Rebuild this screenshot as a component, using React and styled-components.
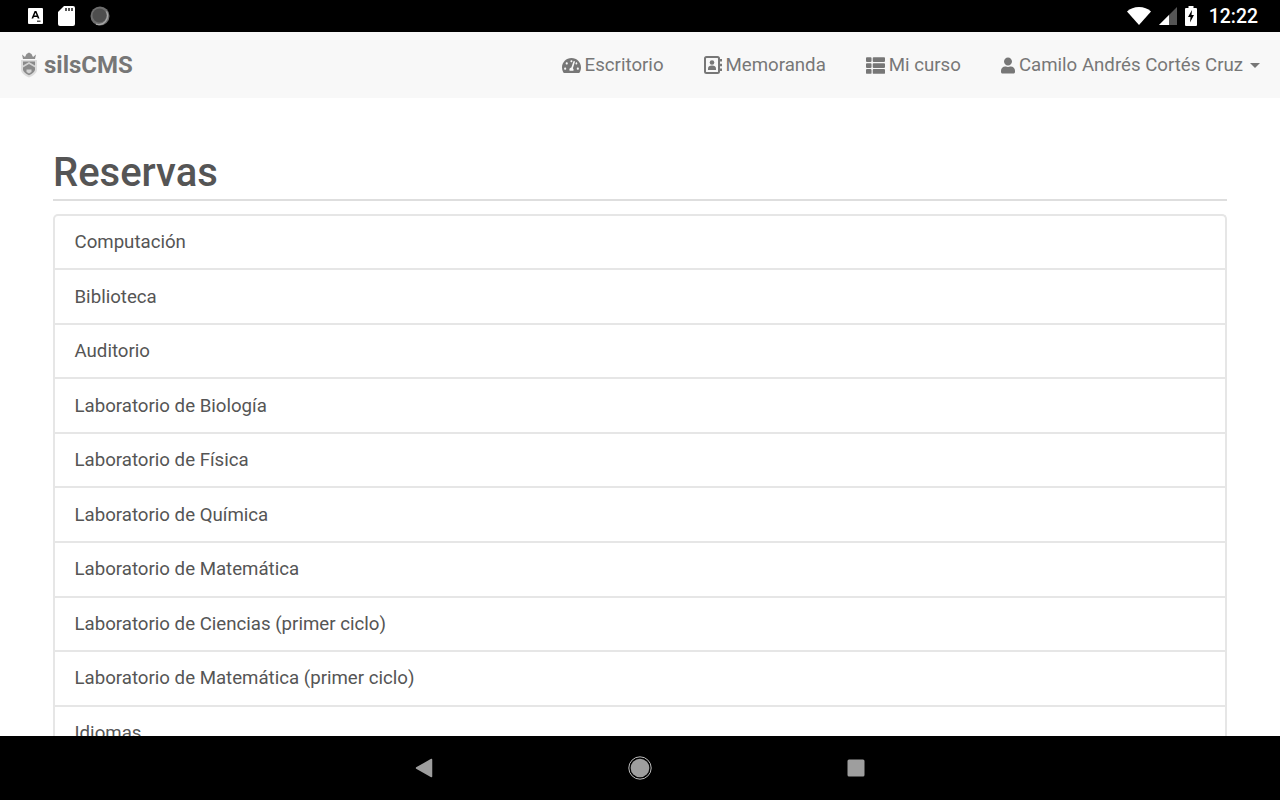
import React from "react";
import styled, { createGlobalStyle } from "styled-components";
import { FaTachometerAlt, FaThList, FaUser } from "react-icons/fa";

const GlobalStyle = createGlobalStyle`
  html, body {
    margin: 0;
    padding: 0;
    background: #000;
  }
  * {
    box-sizing: border-box;
  }
`;

const Screen = styled.div`
  width: 1280px;
  height: 800px;
  display: flex;
  flex-direction: column;
  overflow: hidden;
  font-family: Roboto, "Liberation Sans", sans-serif;
`;

const StatusBar = styled.div`
  height: 32px;
  flex: none;
  background: #000;
  display: flex;
  align-items: center;
  justify-content: space-between;
  padding: 0 22px 0 27px;
`;

const StatusGroup = styled.div`
  display: flex;
  align-items: center;
  gap: ${(p) => p.$gap}px;
`;

const LeftIcons = styled(StatusGroup)`
  margin-left: 1px;
`;

const Clock = styled.span`
  color: #fff;
  font-size: 19.4px;
  font-weight: 500;
  margin-left: 4px;
`;

const Page = styled.div`
  flex: 1;
  min-height: 0;
  overflow: hidden;
  background: #fff;
`;

const Navbar = styled.nav`
  height: 66px;
  background: #f8f8f8;
  display: flex;
  align-items: center;
  justify-content: space-between;
  padding: 0 20px 0 19px;
`;

const Brand = styled.div`
  display: flex;
  align-items: center;
  gap: 5px;
  color: #777;
  font-size: 24px;
  font-weight: 700;
`;

const Menu = styled.div`
  display: flex;
  align-items: center;
  gap: 40px;
`;

const MenuItem = styled.a`
  display: flex;
  align-items: center;
  gap: 4px;
  color: #777;
  font-size: 18.67px;
  line-height: 28px;
  white-space: nowrap;

  svg {
    flex: none;
  }
`;

const UserIcon = styled(FaUser)`
  width: 14px;
  height: 17px;
`;

const Caret = styled.span`
  width: 0;
  height: 0;
  margin-left: 3px;
  border-top: 5.3px solid #777;
  border-left: 5.3px solid transparent;
  border-right: 5.3px solid transparent;
`;

const Container = styled.main`
  padding: 0 53px 0 53px;
`;

const Header = styled.header`
  height: 103px;
  display: flex;
  align-items: flex-end;
  border-bottom: 2px solid #dedede;
`;

const Title = styled.h1`
  margin: 0 0 2px;
  color: #555;
  font-size: 40px;
  font-weight: 500;
  line-height: 48px;
`;

const List = styled.ul`
  list-style: none;
  margin: 12.75px 0 0;
  padding: 0;
  border: 2px solid #e6e6e6;
  border-bottom: 0;
  border-radius: 5px;
`;

const Row = styled.li`
  height: 54.56px;
  padding-left: 19.5px;
  display: flex;
  align-items: center;
  color: #555;
  font-size: 18.67px;
  border-bottom: 2px solid #e6e6e6;
`;

const NavButtons = styled.div`
  height: 64px;
  flex: none;
  background: #000;
  display: flex;
  align-items: center;
  justify-content: center;
  gap: 195px;
`;

const Crest = () => (
  <svg width="20" height="26" viewBox="0 0 20 26">
    <path d="M3 2.500l3 2.500 1.500-3L10 0.500 12.500 2 14 5l3-2.500-1 4.500H4z" fill="#8f8f8f" />
    <path d="M2 8h16v9.500C18 21 14.500 23.500 10 25.500 5.500 23.500 2 21 2 17.500z" fill="#dcdcdc" />
    <path d="M4 9.500h12v8c0 2.300-2.500 4-6 5.700-3.500-1.700-6-3.400-6-5.700z" fill="#8a8a8a" />
    <path d="M4 13.500L10 10l6 3.500V15.500L10 12l-6 3.500zM7.500 17.500h5V20L10 21.500 7.500 20z" fill="#d2d2d2" />
  </svg>
);

const AppIcon = () => (
  <svg width="15" height="16" viewBox="0 0 15 16">
    <rect width="15" height="16" rx="1" fill="#fff" />
    <path d="M3.500 10.500L6.600 3h1.800l3.100 7.500H9.800l-.6-1.600H5.800l-.6 1.600zM6.300 7.600h2.400L7.500 4.700z" fill="#000" />
    <path d="M9 12.500h3.500v1.500H9z" fill="#555" />
  </svg>
);

const SdIcon = () => (
  <svg width="17" height="20" viewBox="0 0 17 20">
    <path d="M6 0h9a2 2 0 0 1 2 2v16a2 2 0 0 1-2 2H2a2 2 0 0 1-2-2V6z" fill="#fff" />
    <path d="M7 2h2v3H7zM10 2h2v3h-2zM13 2h2v3h-2z" fill="#555" />
  </svg>
);

const CircleIcon = () => (
  <svg width="20" height="20" viewBox="0 0 20 20">
    <circle cx="10" cy="10" r="9.500" fill="#6e6e6e" />
    <circle cx="9.500" cy="9.500" r="7" fill="#4e4e4e" />
    <path d="M16.500 5.500A9 9 0 0 1 6 18.200" fill="none" stroke="#a8a8a8" strokeWidth="1.200" />
  </svg>
);

const WifiIcon = () => (
  <svg width="24" height="18" viewBox="0 0 24 18">
    <path d="M0 4.500C3 1.700 7.300 0 12 0s9 1.700 12 4.500L12 18z" fill="#fff" />
  </svg>
);

const SignalIcon = () => (
  <svg width="18" height="18" viewBox="0 0 18 18">
    <path d="M0 18L18 0v18z" fill="#555" />
    <path d="M0 18L10 8v10z" fill="#fff" />
  </svg>
);

const BatteryIcon = () => (
  <svg width="12" height="20" viewBox="0 0 12 20">
    <path d="M3.500 0h5v2H11a1 1 0 0 1 1 1v16a1 1 0 0 1-1 1H1a1 1 0 0 1-1-1V3a1 1 0 0 1 1-1h2.500z" fill="#fff" />
    <path d="M7 4L3 11h2.500L5 16.500 9 9H6.500z" fill="#000" />
  </svg>
);

const ContactIcon = () => (
  <svg width="18" height="18" viewBox="0 0 18 18">
    <rect x="1" y="1" width="14" height="16" rx="1.500" fill="none" stroke="#777" strokeWidth="2" />
    <circle cx="8" cy="6.500" r="2.300" fill="#777" />
    <path d="M4 14v-1.500C4 10.500 5.500 9.500 8 9.500s4 1 4 3V14z" fill="#777" />
    <path d="M16 3h2v2.500h-2zM16 7.700h2v2.500h-2zM16 12.500h2V15h-2z" fill="#777" />
  </svg>
);

const BackIcon = () => (
  <svg width="18" height="20" viewBox="0 0 18 20">
    <path d="M16.500 1.500v17L1.500 10z" fill="#9e9e9e" stroke="#9e9e9e" strokeWidth="1.500" strokeLinejoin="round" />
  </svg>
);

const HomeIcon = () => (
  <svg width="24" height="24" viewBox="0 0 24 24">
    <circle cx="12" cy="12" r="11.200" fill="none" stroke="#bdbdbd" strokeWidth="1" />
    <circle cx="12" cy="12" r="9.300" fill="#9e9e9e" />
  </svg>
);

const RecentIcon = () => (
  <svg width="18" height="18" viewBox="0 0 18 18">
    <rect x="0.500" y="0.500" width="17" height="17" rx="1.500" fill="#9e9e9e" />
  </svg>
);

const places = [
  "Computación",
  "Biblioteca",
  "Auditorio",
  "Laboratorio de Biología",
  "Laboratorio de Física",
  "Laboratorio de Química",
  "Laboratorio de Matemática",
  "Laboratorio de Ciencias (primer ciclo)",
  "Laboratorio de Matemática (primer ciclo)",
  "Idiomas",
];

export default function App() {
  return (
    <Screen>
      <GlobalStyle />
      <StatusBar>
        <LeftIcons $gap={15}>
          <AppIcon />
          <SdIcon />
          <CircleIcon />
        </LeftIcons>
        <StatusGroup $gap={8}>
          <WifiIcon />
          <SignalIcon />
          <BatteryIcon />
          <Clock>12:22</Clock>
        </StatusGroup>
      </StatusBar>
      <Page>
        <Navbar>
          <Brand>
            <Crest />
            silsCMS
          </Brand>
          <Menu>
            <MenuItem>
              <FaTachometerAlt size={19} />
              Escritorio
            </MenuItem>
            <MenuItem>
              <ContactIcon />
              Memoranda
            </MenuItem>
            <MenuItem>
              <FaThList size={19} />
              Mi curso
            </MenuItem>
            <MenuItem>
              <UserIcon />
              Camilo Andrés Cortés Cruz
              <Caret />
            </MenuItem>
          </Menu>
        </Navbar>
        <Container>
          <Header>
            <Title>Reservas</Title>
          </Header>
          <List>
            {places.map((name) => (
              <Row key={name}>{name}</Row>
            ))}
          </List>
        </Container>
      </Page>
      <NavButtons>
        <BackIcon />
        <HomeIcon />
        <RecentIcon />
      </NavButtons>
    </Screen>
  );
}
